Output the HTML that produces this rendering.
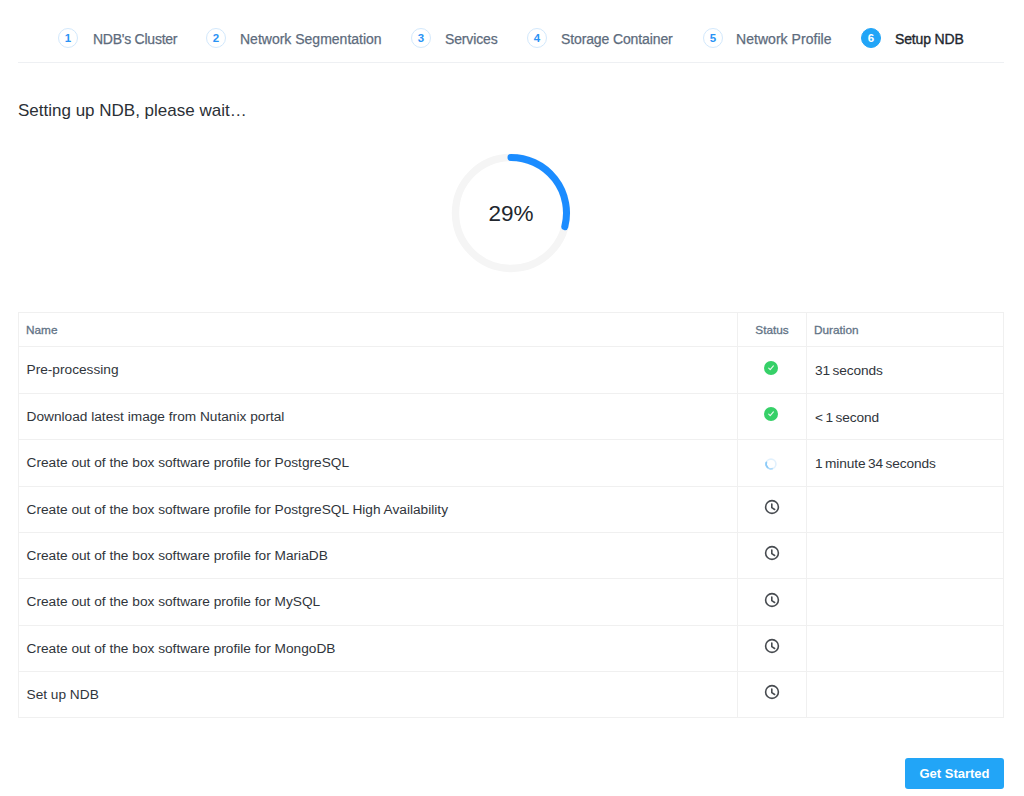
<!DOCTYPE html>
<html>
<head>
<meta charset="utf-8">
<style>
*{box-sizing:border-box;margin:0;padding:0}
html,body{width:1024px;height:796px;background:#fff;overflow:hidden}
body{font-family:"Liberation Sans",sans-serif;color:#22272e;position:relative}
.steps{position:absolute;left:18px;top:0;width:986px;height:63px;border-bottom:1px solid #eef0f3}
.step{position:absolute;top:28.3px;height:20px;display:flex;align-items:center;white-space:nowrap}
.num{width:20px;height:20px;border-radius:50%;border:1px solid #d2e8fc;color:#2a93f5;font-size:11.5px;font-weight:700;display:flex;align-items:center;justify-content:center;line-height:1;padding-top:1.5px}
.num.active{background:#22a5f7;border-color:#22a5f7;color:#fff}
.lbl{position:absolute;font-size:14px;color:#5d6b7c;line-height:16px;-webkit-text-stroke:0.25px #5d6b7c}
.lbl.active{color:#22272e;-webkit-text-stroke:0.35px #22272e}
h1{position:absolute;left:18px;top:100.5px;font-size:17px;font-weight:400;color:#2b3036;line-height:20px;white-space:nowrap}
.ring{position:absolute;left:451px;top:152.5px;width:120px;height:120px}
.pct{position:absolute;left:451px;top:154px;width:120px;height:120px;display:flex;align-items:center;justify-content:center;font-size:22.5px;color:#22272e}
table{position:absolute;left:18px;top:312px;width:985px;border-collapse:collapse;table-layout:fixed}
td,th{border:1px solid #f0f0f0;font-weight:400;text-align:left;padding:0 0 0 8px;white-space:nowrap}
th{height:34px;font-size:11.8px;color:#627386;-webkit-text-stroke:0.3px #627386;padding-left:7px}
td{height:46px;font-size:13.7px;color:#30353b;padding-left:7.5px;padding-bottom:1px}
td:nth-child(3){letter-spacing:-0.1px;word-spacing:-1.2px;padding-left:8px;padding-bottom:0;padding-top:1px}
.c2{text-align:center;padding:0}
.ic{display:block;margin:0 auto}
.abs{position:absolute;display:block}
.btn{position:absolute;left:905px;top:758px;width:99px;height:31px;border-radius:3px;background:#22a5f7;color:#fff;font-size:13px;font-weight:700;display:flex;align-items:center;justify-content:center}
</style>
</head>
<body>
<div class="steps">
  <div class="step" style="left:40px"><div class="num">1</div></div>
  <div class="lbl" style="left:75px;top:30.5px;letter-spacing:-0.25px">NDB's Cluster</div>
  <div class="step" style="left:188px"><div class="num">2</div></div>
  <div class="lbl" style="left:222px;top:30.5px;letter-spacing:0px">Network Segmentation</div>
  <div class="step" style="left:393px"><div class="num">3</div></div>
  <div class="lbl" style="left:427px;top:30.5px;letter-spacing:-0.14px">Services</div>
  <div class="step" style="left:509px"><div class="num">4</div></div>
  <div class="lbl" style="left:543px;top:30.5px;letter-spacing:-0.12px">Storage Container</div>
  <div class="step" style="left:685px"><div class="num">5</div></div>
  <div class="lbl" style="left:718px;top:30.5px;letter-spacing:0.04px">Network Profile</div>
  <div class="step" style="left:843px"><div class="num active">6</div></div>
  <div class="lbl active" style="left:877px;top:30.5px;letter-spacing:-0.15px">Setup NDB</div>
</div>

<h1>Setting up NDB, please wait…</h1>

<svg class="ring" viewBox="0 0 120 120">
  <circle cx="60" cy="60" r="55.5" fill="none" stroke="#f5f5f5" stroke-width="7.4"/>
  <path d="M60 4.5 A55.5 55.5 0 0 1 113.8 73.7" fill="none" stroke="#1b8cff" stroke-width="7" stroke-linecap="round"/>
</svg>
<div class="pct">29%</div>

<table>
  <colgroup><col style="width:719px"><col style="width:69px"><col style="width:197px"></colgroup>
  <tr><th>Name</th><th class="c2">Status</th><th>Duration</th></tr>
  <tr style="height:47px"><td>Pre-processing</td><td class="c2"></td><td>31 seconds</td></tr>
  <tr style="height:46px"><td>Download latest image from Nutanix portal</td><td class="c2"></td><td>&lt; 1 second</td></tr>
  <tr style="height:47px"><td>Create out of the box software profile for PostgreSQL</td><td class="c2"></td><td>1 minute 34 seconds</td></tr>
  <tr style="height:46px"><td>Create out of the box software profile for PostgreSQL High Availability</td><td class="c2"></td><td></td></tr>
  <tr style="height:46px"><td>Create out of the box software profile for MariaDB</td><td class="c2"></td><td></td></tr>
  <tr style="height:47px"><td>Create out of the box software profile for MySQL</td><td class="c2"></td><td></td></tr>
  <tr style="height:46px"><td>Create out of the box software profile for MongoDB</td><td class="c2"></td><td></td></tr>
  <tr style="height:46px"><td>Set up NDB</td><td class="c2"></td><td></td></tr>
</table>

<svg class="abs" style="left:764.40px;top:360.80px" width="14" height="14" viewBox="0 0 14 14"><circle cx="7" cy="7" r="7" fill="#36d068"/><path d="M4.7 7.2 L6.2 8.7 L9.4 4.9" fill="none" stroke="#fff" stroke-opacity="0.9" stroke-width="1.1" stroke-linecap="round" stroke-linejoin="round"/></svg>
<svg class="abs" style="left:764.40px;top:407.00px" width="14" height="14" viewBox="0 0 14 14"><circle cx="7" cy="7" r="7" fill="#36d068"/><path d="M4.7 7.2 L6.2 8.7 L9.4 4.9" fill="none" stroke="#fff" stroke-opacity="0.9" stroke-width="1.1" stroke-linecap="round" stroke-linejoin="round"/></svg>
<svg class="abs" style="left:764.00px;top:457.00px" width="14" height="14" viewBox="0 0 14 14"><circle cx="7" cy="7" r="4.9" fill="none" stroke="#e2f1fd" stroke-width="1.6"/><path d="M2.4 5.3 A4.9 4.9 0 0 0 8.8 11.55" fill="none" stroke="#acd9fa" stroke-width="1.6"/><path d="M2.4 5.3 A4.9 4.9 0 0 0 3.6 10.4" fill="none" stroke="#8ccbf8" stroke-width="1.6" stroke-linecap="round"/></svg>
<svg class="abs" style="left:763.70px;top:499.00px" width="16" height="16" viewBox="0 0 16 16"><circle cx="8" cy="8" r="6.4" fill="none" stroke="#474b50" stroke-width="1.6"/><path d="M7.8 5.1 V8.7 L10.6 10.5" fill="none" stroke="#474b50" stroke-width="1.6" stroke-linecap="round" stroke-linejoin="round"/></svg>
<svg class="abs" style="left:763.70px;top:545.30px" width="16" height="16" viewBox="0 0 16 16"><circle cx="8" cy="8" r="6.4" fill="none" stroke="#474b50" stroke-width="1.6"/><path d="M7.8 5.1 V8.7 L10.6 10.5" fill="none" stroke="#474b50" stroke-width="1.6" stroke-linecap="round" stroke-linejoin="round"/></svg>
<svg class="abs" style="left:763.70px;top:591.60px" width="16" height="16" viewBox="0 0 16 16"><circle cx="8" cy="8" r="6.4" fill="none" stroke="#474b50" stroke-width="1.6"/><path d="M7.8 5.1 V8.7 L10.6 10.5" fill="none" stroke="#474b50" stroke-width="1.6" stroke-linecap="round" stroke-linejoin="round"/></svg>
<svg class="abs" style="left:763.70px;top:637.90px" width="16" height="16" viewBox="0 0 16 16"><circle cx="8" cy="8" r="6.4" fill="none" stroke="#474b50" stroke-width="1.6"/><path d="M7.8 5.1 V8.7 L10.6 10.5" fill="none" stroke="#474b50" stroke-width="1.6" stroke-linecap="round" stroke-linejoin="round"/></svg>
<svg class="abs" style="left:763.70px;top:684.20px" width="16" height="16" viewBox="0 0 16 16"><circle cx="8" cy="8" r="6.4" fill="none" stroke="#474b50" stroke-width="1.6"/><path d="M7.8 5.1 V8.7 L10.6 10.5" fill="none" stroke="#474b50" stroke-width="1.6" stroke-linecap="round" stroke-linejoin="round"/></svg>
<div class="btn">Get Started</div>
</body>
</html>
